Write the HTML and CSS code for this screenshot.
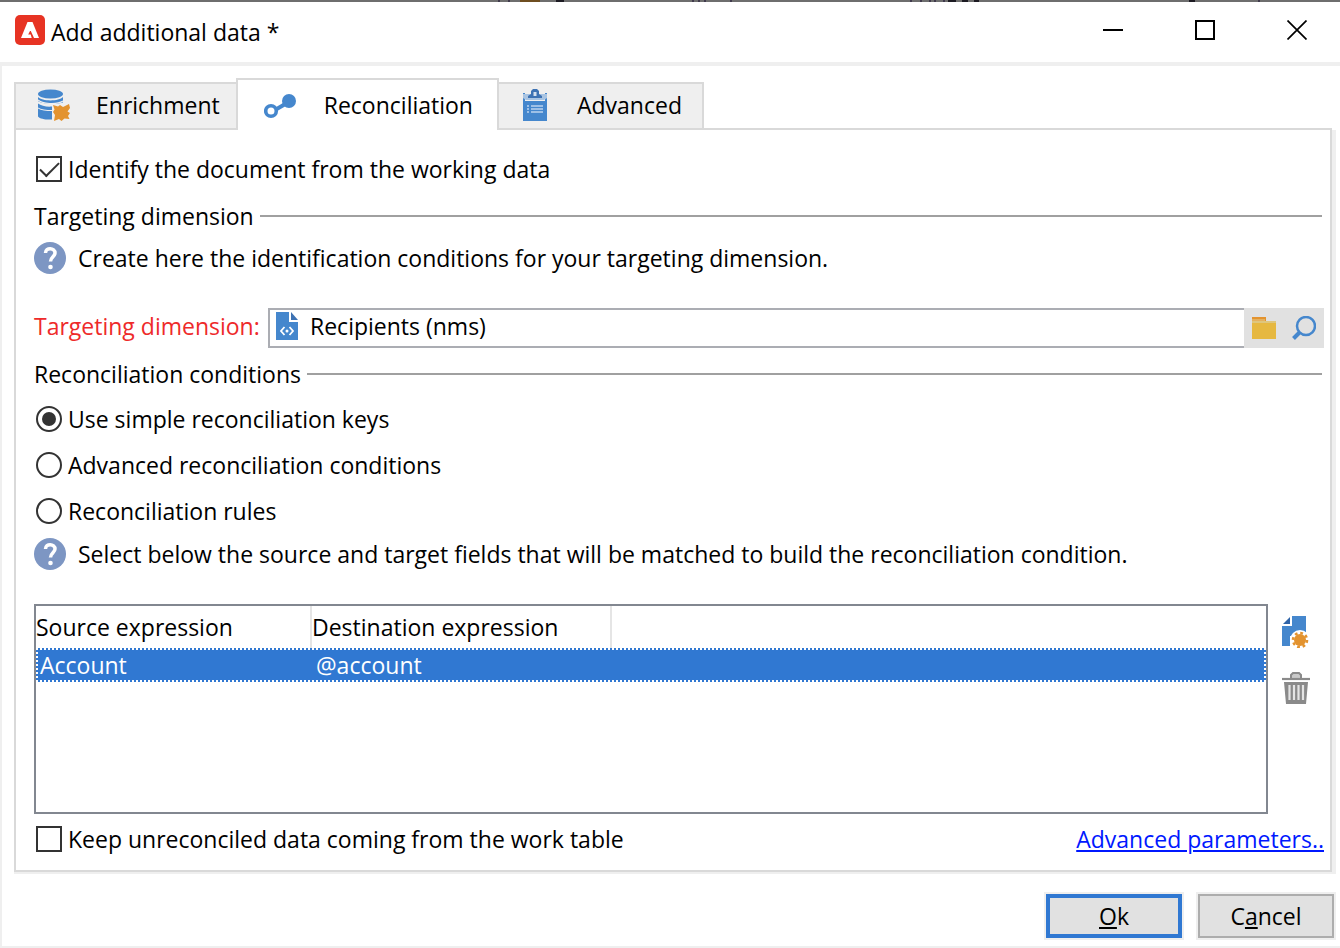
FILE: index.html
```html
<!DOCTYPE html>
<html lang="en">
<head>
    <meta charset="UTF-8">
    <meta name="viewport" content="width=device-width, initial-scale=1.0">
    <title>Add additional data</title>
    <link rel="stylesheet" href="styles.css">
</head>
<body>

<div class="window">
    <div class="backdrop">
        <svg width="1340" height="2" viewBox="0 0 1340 2">
            <path d="M520 0h20v2h-20z" fill="#6e4d20"/>
            <path d="M556 0h8v2h-8zM1189 0h6v2h-6zM948 0h8v2h-8zM962 0h6v2h-6zM974 0h5v2h-5z" fill="#1c1a22"/>
            <path d="M498 0h2v2h-2zM508 0h2v2h-2zM692 0h2v2h-2zM698 0h2v2h-2zM704 0h2v2h-2zM730 0h2v2h-2zM910 0h2v2h-2zM920 0h2v2h-2zM929 0h2v2h-2zM934 0h2v2h-2zM943 0h2v2h-2zM1258 0h2v2h-2z" fill="#403a4c"/>
        </svg>
    </div>
    <header class="titlebar">
        <svg class="logo" width="30" height="30" viewBox="0 0 30 30">
            <rect width="30" height="30" rx="5" fill="#e73323"/>
            <path d="M12.500 7h5L24 23h-5l-3.200-7h-.8l-1.800 3.500h2.500l1 3.500H6z" fill="#fff"/>
        </svg>
        <h1>Add additional data *</h1>
        <div class="window-buttons">
            <button type="button" aria-label="Minimize">
                <svg width="20" height="20" viewBox="0 0 20 20"><path d="M0 10h20" stroke="#000" stroke-width="2"/></svg>
            </button>
            <button type="button" aria-label="Maximize">
                <svg width="20" height="20" viewBox="0 0 20 20"><rect x="1" y="1" width="18" height="18" fill="none" stroke="#000" stroke-width="2"/></svg>
            </button>
            <button type="button" aria-label="Close">
                <svg width="20" height="20" viewBox="0 0 20 20"><path d="M.5.5l19 19M19.500.5l-19 19" stroke="#000" stroke-width="1.700"/></svg>
            </button>
        </div>
    </header>

    <main class="content">
        <div class="tabs" role="tablist">
            <button type="button" class="tab" role="tab">
                <svg width="32" height="32" viewBox="0 0 32 32">
                    <g fill="#4587cd">
                        <ellipse cx="12.500" cy="5" rx="12.500" ry="4.500"/>
                        <path d="M0 8c4 4.500 21 4.500 25 0v5.500c-3 .5-6 1.500-9 1.500-7 0-14-1-16-3z"/>
                        <path d="M0 14.500c3 2.500 9 3.500 14 3v3.500c-6 0-11-.5-14-2.500z"/>
                        <path d="M0 19.500c3 2 8 2.500 14 2.500v8.500c-6 .3-12-.5-14-3z"/>
                    </g>
                    <path d="M0 11c4 4 19 5 25 1" stroke="#efefef" stroke-width="1.200" fill="none"/>
                    <path d="M15 16l5 1.500 2-1.500 3 2 6-3 1 4-2.500 3.500 2.500 1.500-2 3 1.500 3-5-.5-3 2.500-2.500-2-5 2 1-6-2-3 1.500-2.500z" fill="#e3932f"/>
                </svg>
                Enrichment
            </button>
            <button type="button" class="tab active" role="tab" aria-selected="true">
                <svg width="34" height="32" viewBox="0 0 34 32">
                    <path d="M11 21l12-7" stroke="#4587cd" stroke-width="4"/>
                    <circle cx="25" cy="12" r="7" fill="#4587cd"/>
                    <circle cx="7" cy="22" r="5.300" fill="#fff" stroke="#4587cd" stroke-width="3.600"/>
                </svg>
                Reconciliation
            </button>
            <button type="button" class="tab" role="tab">
                <svg width="32" height="32" viewBox="0 0 32 32">
                    <path d="M4 4h24v28H4z" fill="#4587cd"/>
                    <path d="M6 4h20v8H6z" fill="#efefef"/>
                    <path d="M4 5h24v4l-3 2H7l-3-2z" fill="#a9c4e2"/>
                    <path d="M9 9V7l3-2V2l2-2h4l2 2v3l3 2v2z" fill="#3d72b3"/>
                    <path d="M14.500 3h3v4h-3z" fill="#d5e0ee"/>
                    <path d="M8 17h2M12 17h12M8 20h2M12 20h12M8 23h2M12 23h12" stroke="#bcd3ee" stroke-width="1.600"/>
                </svg>
                Advanced
            </button>
        </div>

        <form class="panel">
            <label class="option"><input type="checkbox" checked> Identify the document from the working data</label>

            <h2 class="section">Targeting dimension</h2>
            <p class="help">
                <svg width="32" height="32" viewBox="0 0 32 32">
                    <circle cx="16" cy="16" r="16" fill="#7d96c3"/>
                    <path d="M11.500 11c0-6 9.500-5.500 9.500 0 0 3.500-4.500 4-4.500 8.500" fill="none" stroke="#fff" stroke-width="3.500"/>
                    <circle cx="16.500" cy="25" r="2.300" fill="#fff"/>
                </svg>
                Create here the identification conditions for your targeting dimension.
            </p>

            <div class="field">
                <label for="dimension">Targeting dimension:</label>
                <div class="field-box">
                    <svg width="22" height="28" viewBox="0 0 22 28">
                        <path d="M0 0h13v10h9v18H0z" fill="#4587cd"/>
                        <path d="M15 0l7 8h-7z" fill="#3d72b3"/>
                        <path d="M8.500 15L5 19l3.500 4M13.500 15l3.500 4-3.500 4" fill="none" stroke="#fff" stroke-width="1.800"/>
                        <circle cx="11" cy="19" r="1.500" fill="#fff"/>
                    </svg>
                    <input type="text" id="dimension" value="Recipients (nms)">
                </div>
                <div class="field-buttons">
                    <button type="button" aria-label="Browse">
                        <svg width="24" height="24" viewBox="0 0 24 24">
                            <path d="M0 1h14v5H0z" fill="#e3932f"/>
                            <path d="M0 3h13v2H0z" fill="#e4b15f"/>
                            <path d="M0 5h24v18H0z" fill="#e6b840"/>
                            <path d="M0 5h24v2H0z" fill="#dfc67c"/>
                        </svg>
                    </button>
                    <button type="button" aria-label="Search">
                        <svg width="24" height="24" viewBox="0 0 24 24">
                            <circle cx="14" cy="10" r="9" fill="none" stroke="#4587cd" stroke-width="2.500"/>
                            <path d="M8 16l-6.500 6.500" stroke="#4587cd" stroke-width="4"/>
                        </svg>
                    </button>
                </div>
            </div>

            <h2 class="section">Reconciliation conditions</h2>
            <label class="option"><input type="radio" name="mode" checked> Use simple reconciliation keys</label>
            <label class="option"><input type="radio" name="mode"> Advanced reconciliation conditions</label>
            <label class="option"><input type="radio" name="mode"> Reconciliation rules</label>
            <p class="help">
                <svg width="32" height="32" viewBox="0 0 32 32">
                    <circle cx="16" cy="16" r="16" fill="#7d96c3"/>
                    <path d="M11.500 11c0-6 9.500-5.500 9.500 0 0 3.500-4.500 4-4.500 8.500" fill="none" stroke="#fff" stroke-width="3.500"/>
                    <circle cx="16.500" cy="25" r="2.300" fill="#fff"/>
                </svg>
                Select below the source and target fields that will be matched to build the reconciliation condition.
            </p>

            <div class="keys">
                <div class="keys-list">
                    <table>
                        <thead>
                            <tr>
                                <th class="col-source">Source expression</th>
                                <th class="col-destination">Destination expression</th>
                                <th></th>
                            </tr>
                        </thead>
                        <tbody>
                            <tr class="selected">
                                <td>Account</td>
                                <td>@account</td>
                                <td></td>
                            </tr>
                        </tbody>
                    </table>
                </div>
                <div class="keys-buttons">
                    <button type="button" aria-label="Add">
                        <svg width="28" height="32" viewBox="0 0 28 32">
                            <path d="M10 0h14v20H8v10H0V10h10z" fill="#4587cd"/>
                            <path d="M8 1v7H1z" fill="#2f64a8"/>
                            <circle cx="18" cy="24" r="10" fill="#fff"/>
                            <circle cx="18" cy="24" r="6" fill="#e3932f"/>
                            <circle cx="18" cy="24" r="7" fill="none" stroke="#e3932f" stroke-width="2.600" stroke-dasharray="2.750"/>
                        </svg>
                    </button>
                    <button type="button" aria-label="Delete">
                        <svg width="28" height="32" viewBox="0 0 28 32">
                            <path d="M9 6V3l2-2h6l2 2v3" fill="#c9c9c9" stroke="#8a8a8a" stroke-width="2"/>
                            <path d="M0 7h28" stroke="#8a8a8a" stroke-width="2.200"/>
                            <path d="M2 10h24l-2 22H4z" fill="#8a8a8a"/>
                            <path d="M7.500 13v15M12 13v15M16.500 13v15M21 13v15" stroke="#e4e4e4" stroke-width="2.200"/>
                        </svg>
                    </button>
                </div>
            </div>

            <div class="panel-bottom">
                <label class="option"><input type="checkbox"> Keep unreconciled data coming from the work table</label>
                <a href="#">Advanced parameters..</a>
            </div>
        </form>
    </main>

    <footer class="actions">
        <button type="button" class="button primary"><u>O</u>k</button>
        <button type="button" class="button">C<u>a</u>ncel</button>
    </footer>
</div>

</body>
</html>
```

FILE: styles.css
```css
* {
    box-sizing: border-box;
}
body {
    margin: 0;
    font-family: "Open Sans", "Noto Sans", sans-serif;
    font-size: 23px;
    line-height: 30px;
    color: #000;
}
button, input {
    font: inherit;
    color: inherit;
}
button {
    padding: 0;
    border: none;
    background: none;
}
svg {
    display: block;
    flex: none;
}
h1, h2, p {
    margin: 0;
    font-size: inherit;
    font-weight: normal;
}
.window {
    display: flex;
    flex-direction: column;
    min-height: 100vh;
    border-bottom: 2px solid #efefef;
    background-color: #fff;
}
.backdrop {
    height: 2px;
    overflow: hidden;
    background-color: #6e6e6e;
}

/* Title bar */
.titlebar {
    display: flex;
    align-items: center;
    height: 64px;
    padding: 0 33px 4px 15px;
    border-bottom: 4px solid #efefef;
}
.titlebar h1 {
    flex: 1;
    margin-left: 6px;
    padding-top: 4px;
}
.window-buttons {
    display: flex;
    gap: 72px;
}

/* Tabs */
.content {
    flex: 1;
    display: flex;
    flex-direction: column;
    padding: 12px 8px 0 12px;
    border-left: 2px solid #efefef;
}
.tabs {
    z-index: 1;
    display: flex;
    align-items: flex-end;
}
.tab {
    display: flex;
    align-items: center;
    gap: 26px;
    height: 48px;
    padding: 0 20px 2px;
    border: 2px solid #d9d9d9;
    background-color: #efefef;
}
.tab:first-child {
    padding: 0 16px 2px 22px;
    border-right: none;
}
.tab:last-child {
    border-left: none;
}
.tab.active {
    height: 52px;
    padding: 0 24px 0 26px;
    border-bottom: none;
    background-color: #fff;
}

.panel {
    flex: 1;
    display: flex;
    flex-direction: column;
    margin-top: -2px;
    padding: 16px 6px 8px 18px;
    border: 2px solid #d9d9d9;
    box-shadow: 4px 2px 0 #efefef, 0 2px 0 #efefef;
}
.option {
    display: flex;
    align-items: center;
    gap: 6px;
    height: 46px;
    padding-left: 2px;
}
.option input {
    flex: none;
    appearance: none;
    display: grid;
    place-items: center;
    width: 26px;
    height: 26px;
    margin: 0;
    border: 2px solid #333;
    background-color: #fff;
}
.option input[type="radio"] {
    border-radius: 50%;
}
.option input[type="radio"]:checked::before {
    content: "";
    width: 14px;
    height: 14px;
    border-radius: 50%;
    background-color: #333;
}
.option input[type="checkbox"]:checked::before {
    content: "";
    width: 17px;
    height: 8px;
    margin-bottom: 5px;
    border-left: 2px solid #333;
    border-bottom: 2px solid #333;
    transform: rotate(-45deg);
}
.section {
    display: flex;
    align-items: center;
    gap: 6px;
    height: 44px;
    margin: 2px 2px 0 0;
}
.section::after {
    content: "";
    flex: 1;
    height: 2px;
    background-color: #a0a0a0;
}
.help {
    display: flex;
    align-items: center;
    gap: 12px;
    height: 36px;
    margin-top: 2px;
}

/* Targeting dimension field */
.field {
    display: flex;
    height: 40px;
    margin: 32px 0 2px;
}
.field label {
    width: 234px;
    line-height: 36px;
    color: #ee2a2a;
    white-space: nowrap;
}
.field-box {
    flex: 1;
    display: flex;
    gap: 12px;
    padding: 2px 6px;
    border: 2px solid #abadb3;
    border-right: none;
}
.field-box input {
    flex: 1;
    height: 28px;
    padding: 0;
    border: none;
    outline: none;
}
.field-buttons {
    display: flex;
    align-items: center;
    gap: 16px;
    padding: 0 8px;
    background-color: #e1e1e1;
}

/* Reconciliation keys */
.keys {
    flex: 1;
    display: flex;
    gap: 14px;
    margin-top: 32px;
}
.keys-list {
    flex: 1;
    border: 2px solid #828790;
}
table {
    width: 100%;
    border-spacing: 0;
    table-layout: fixed;
}
th {
    height: 42px;
    padding: 0;
    border-right: 2px solid #e5e5e5;
    font-weight: normal;
    text-align: left;
}
th:last-child {
    border-right: none;
}
.col-source {
    width: 276px;
}
.col-destination {
    width: 300px;
}
td {
    height: 34px;
    padding: 0 4px;
}
.selected {
    background-color: #3078d2;
    color: #fff;
    outline: 2px dotted #fff;
    outline-offset: -2px;
}
.keys-buttons {
    display: flex;
    flex-direction: column;
    gap: 24px;
    padding: 12px 14px 0 0;
}
.panel-bottom {
    display: flex;
    align-items: center;
    justify-content: space-between;
    margin-top: 2px;
}
.panel-bottom a {
    color: #0018ff;
}

/* Bottom buttons */
.actions {
    display: flex;
    justify-content: flex-end;
    gap: 16px;
    padding: 22px 6px 8px;
    border-left: 2px solid #efefef;
}
.button {
    width: 136px;
    height: 44px;
    border: 2px solid #adadad;
    background-color: #e1e1e1;
    box-shadow: 0 0 0 2px #efefef;
}
.button.primary {
    border: 4px solid #3078d2;
}
```
